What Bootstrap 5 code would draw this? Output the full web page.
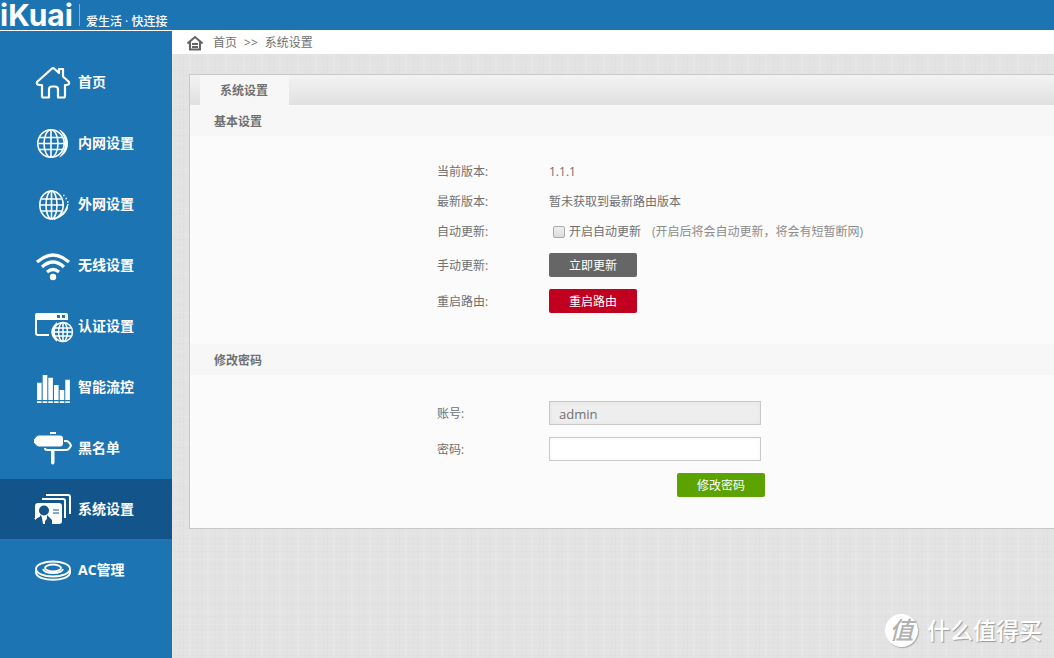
<!DOCTYPE html>
<html lang="zh-CN">
<head>
<meta charset="utf-8">
<meta name="viewport" content="width=device-width, initial-scale=1">
<title>iKuai 系统设置</title>
<link href="https://cdn.jsdelivr.net/npm/bootstrap@5.3.0/dist/css/bootstrap.min.css" rel="stylesheet">
<style>
  body {
    font: 12px/18px "Open Sans", "Noto Sans CJK SC", sans-serif;
    color: #707070;
    background-color: #e3e3e3;
    background-image:
      repeating-linear-gradient(90deg, #0000 0 3px, #00000003 3px 4px, #0000 4px 9px, #ffffff18 9px 11px, #0000 11px 17px, #00000003 17px 18px),
      repeating-linear-gradient(0deg, #0000 0 2px, #00000003 2px 3px, #0000 3px 7px, #ffffff18 7px 8px, #0000 8px 13px);
  }
  .topbar { height: 30px; background: #1d74b3; color: #fff; }
  .brand-name { font: 700 30px/30px Inter, sans-serif; width: 79px; color: #fff; }
  .brand-rule { width: 1px; height: 22px; background: #7fb0d6; }
  .slogan { font-size: 12px; line-height: 16px; font-weight: 500; padding: 14px 0 0 6px; }
  .sidebar { width: 172px; background: #1d74b3; border-top: 1px solid #fff; padding-top: 21px; gap: 1px; }
  .side-link { height: 60px; padding-left: 32px; gap: 4px; color: #fff; font-size: 14px; font-weight: 700; text-decoration: none; }
  .side-link:hover, .side-link.active { background: #13558a; color: #fff; }
  .side-link svg { width: 42px; height: 40px; flex: none; }
  .crumbs { height: 24px; background: #fff; padding: 2px 0 0 15px; gap: 7px; }
  .crumbs a { color: #707070; text-decoration: none; }
  .crumbs svg { width: 16px; height: 16px; margin-right: 3px; }
  .panel { margin: 20px 0 0 17px; background: #fbfbfb; border: 1px solid #c8c8c8; border-right: 0; }
  .tabstrip { height: 30px; padding-left: 10px; background: linear-gradient(#f3f3f3, #e0e0e0); }
  .tab-btn { border: 0; background: #f7f7f7; color: #707070; font-weight: 700; padding: 2px 21px 0 20px; }
  .section-title { margin: 0; font-size: 12px; line-height: 29px; font-weight: 700; background: #f7f7f7; padding: 2px 0 0 24px; }
  .section-body { padding: 20px 0 25px calc(25% + 31px); }
  .version-body { padding-top: 21px; }
  .line { min-height: 30px; }
  .line-tall { min-height: 36px; }
  .line-label { width: 112px; flex: none; }
  .line-tall .line-label { padding-top: 2px; }
  .act { width: 88px; height: 24px; border: 0; border-radius: 2px; color: #fff; font-size: 12px; line-height: 22px; padding: 2px 0 0; }
  .act-gray { background: #666; }
  .act-red { background: #c1001f; }
  .act-green { background: #5ca300; }
  .field { width: 212px; height: 24px; border: 1px solid #c8c8c8; color: #707070; background: #fff; font-size: 13px; padding: 2px 9px 0; box-shadow: inset 0 0 4px #0000000c; }
  .field:disabled { background: #eee; }
  .submit-row { width: 328px; }
  .tick { appearance: none; width: 12px; height: 12px; margin: 0 4px; border: 1px solid #aaa; border-radius: 2px; background: linear-gradient(#eee, #ddd); }
  .tick:checked { background: #666; }
  .hint { color: #8c8c8c; margin-left: 11px; }
  .watermark { right: 12px; bottom: 11px; gap: 9px; color: #fff; font-size: 23px; font-weight: 500; line-height: 34px; text-shadow: 1px 1px 1px #999; }
  .watermark-dot { width: 33px; height: 33px; background: #fff; color: #b0b0b0; font-size: 24px; line-height: 31px; text-shadow: none; box-shadow: 1px 1px 1px #aaa; font-style: italic; }
</style>
</head>
<body class="d-flex flex-column min-vh-100 position-relative">
<header class="topbar d-flex align-items-center">
  <div class="brand-name">iKuai</div>
  <div class="brand-rule"></div>
  <div class="slogan">爱生活 · 快连接</div>
</header>
<div class="d-flex flex-grow-1">
  <nav class="sidebar d-flex flex-column flex-shrink-0" aria-label="主菜单">
    <a class="side-link d-flex align-items-center" href="#"><svg viewBox="0 0 42 40" fill="none" stroke="#fff" stroke-width="2.2" stroke-linejoin="round"><path d="M5 20 20 6.500q1-.8 2 0l5 4.500V7h4v7.500l6 5.500q1 3-3 3h-1v11q0 1.500-1.500 1.500H26v-8q0-3-3-3h-3q-3 0-3 3v8h-5.500Q10 35.500 10 34V23H8q-4 0-3-3z"/></svg>首页</a>
    <a class="side-link d-flex align-items-center" href="#"><svg viewBox="0 0 42 40" fill="none" stroke="#fff" stroke-width="1.600"><ellipse cx="19" cy="20.500" rx="13.200" ry="13.800"/><ellipse cx="19" cy="20.500" rx="7" ry="13.800"/><path d="M19 7v27M6 20.500h26M8 14.500h22M8 26.500h22"/><path d="M27 6.500c12 5 12 23 0 28q12-14 0-28z" fill="#fff" stroke="none"/></svg>内网设置</a>
    <a class="side-link d-flex align-items-center" href="#"><svg viewBox="0 0 42 40" fill="none" stroke="#fff" stroke-width="1.600"><ellipse cx="19.500" cy="21" rx="11.700" ry="14"/><ellipse cx="19.500" cy="21" rx="5.500" ry="14"/><path d="M19.500 7v28M8 21h23M9.500 15h20M9.500 27h20"/><path d="M36 20q0 11-14 15.500 8-5 11-9z" fill="#fff" stroke-width="1"/><path d="M31 11.500h1.500M33.500 14.500H35M35 18h1.500"/></svg>外网设置</a>
    <a class="side-link d-flex align-items-center" href="#"><svg viewBox="0 0 42 40" fill="none" stroke="#fff" stroke-width="3.200"><path d="M5 17q16-14 32 0M10 22q11-10 22 0M15 27q6-5 12 0"/><circle cx="21" cy="32" r="3.200" fill="#fff" stroke="none"/></svg>无线设置</a>
    <a class="side-link d-flex align-items-center" href="#"><svg viewBox="0 0 42 40" fill="none" stroke="#fff" stroke-width="1.500"><path d="M3 13V9q0-2 2-2h29q2 0 2 2v5H3zM25 9v3h3V9zm5 0v3h3V9z" fill="#fff" fill-rule="evenodd" stroke="none"/><path d="M4 10v17q0 2 2 2h11" stroke-width="2"/><circle cx="31" cy="26" r="9.500"/><ellipse cx="31" cy="26" rx="4.500" ry="9.500"/><path d="M31 16.500v19M21.500 26h19M23 22h16M23 30h16"/><path d="M25 17q-6 9 0 18-10-9 0-18z" fill="#fff"/></svg>认证设置</a>
    <a class="side-link d-flex align-items-center" href="#"><svg viewBox="0 0 42 40" fill="#fff"><path d="M5 15.700h4.600V33H5zM10.700 8h4.600v25h-4.600zm5.600 2.700h4.600V33h-4.600zM22 18h4.600v15H22zm5.700 5h4.600v10h-4.600zm5.600-10.300h4.600V33h-4.600zM5 34.300h4.600V36H5zm5.700 0h4.600V36h-4.600zm5.600 0h4.600V36h-4.600zm5.700 0h4.600V36H22zm5.700 0h4.600V36h-4.600zm5.600 0h4.600V36h-4.600z"/></svg>智能流控</a>
    <a class="side-link d-flex align-items-center" href="#"><svg viewBox="0 0 42 40" fill="#fff"><path d="M18 4h6v2h-6zM7 7.500h21q3 0 3 3v5q0 3-3 3H7q-2 0-5-4v-3q3-4 5-4z"/><path d="M32 13h2q3 0 5 4.500-2 4.500-5 4.500H15q-2 0-2-2" fill="none" stroke="#fff" stroke-width="2"/><path d="M19 23h3.500v12q-1.700 3-3.500 0z"/></svg>黑名单</a>
    <a class="side-link active d-flex align-items-center" href="#" aria-current="page"><svg viewBox="0 0 42 40" fill="none" stroke="#fff" stroke-width="2"><path d="M14 6h22q2 0 2 2v17M10 10h21q2 0 2 2v17"/><path d="M6 14h21q3 0 3 3v15q0 3-3 3H17l-1-6-3 3v3H3V17q0-3 3-3z" fill="#fff" stroke="none"/><circle cx="12" cy="21.500" r="5" fill="#13558a" stroke="none"/><path d="m9 26-6 5v4h8l-1-6zM15 26l5 5v4h-6l1-6z" fill="#13558a" stroke="none"/><path d="M3 30q1-2 5-3" stroke-width="1.500"/><path d="M21 21h6M21 24h6" stroke="#13558a" stroke-width="1"/></svg>系统设置</a>
    <a class="side-link d-flex align-items-center" href="#"><svg viewBox="0 0 42 40" fill="none" stroke="#fff" stroke-width="1.900"><ellipse cx="21" cy="19" rx="17" ry="7.500"/><ellipse cx="21" cy="18" rx="8" ry="3.500"/><path d="M4 20v3c2 9 32 9 34 0v-3M11 19q1 4 10 4t10-4"/></svg>AC管理</a>
  </nav>
  <main class="flex-grow-1">
    <nav class="crumbs d-flex align-items-center" aria-label="当前位置">
      <svg viewBox="0 0 16 16" fill="none" stroke="#666" stroke-width="2"><path d="M.5 8.500 8 2l7.500 6.500M3 7v7.500h10V7"/><path d="M5 9h6M5 12h6"/></svg>
      <a href="#">首页</a><span>&gt;&gt;</span><a href="#">系统设置</a>
    </nav>
    <section class="panel">
      <div class="tabstrip d-flex" role="tablist"><button class="tab-btn" type="button" role="tab" aria-selected="true">系统设置</button></div>
      <h2 class="section-title">基本设置</h2>
      <div class="section-body version-body">
        <div class="line d-flex align-items-center"><span class="line-label">当前版本:</span><span>1.1.1</span></div>
        <div class="line d-flex align-items-center"><span class="line-label">最新版本:</span><span>暂未获取到最新路由版本</span></div>
        <div class="line d-flex align-items-center"><span class="line-label">自动更新:</span><input class="tick" type="checkbox" id="auto"><label for="auto">开启自动更新</label><span class="hint">(开启后将会自动更新，将会有短暂断网)</span></div>
        <div class="line line-tall d-flex align-items-center"><span class="line-label">手动更新:</span><button class="act act-gray" type="button">立即更新</button></div>
        <div class="line line-tall d-flex align-items-center"><span class="line-label">重启路由:</span><button class="act act-red" type="button">重启路由</button></div>
      </div>
      <h2 class="section-title">修改密码</h2>
      <form class="section-body">
        <div class="line line-tall d-flex align-items-center"><label class="line-label" for="user">账号:</label><input class="field" id="user" type="text" value="admin" disabled></div>
        <div class="line line-tall d-flex align-items-center"><label class="line-label" for="pass">密码:</label><input class="field" id="pass" type="password"></div>
        <div class="line line-tall submit-row d-flex align-items-center justify-content-end"><button class="act act-green" type="button">修改密码</button></div>
      </form>
    </section>
  </main>
</div>
<div class="watermark position-absolute d-flex align-items-center"><span class="watermark-dot rounded-circle text-center">值</span><span>什么值得买</span></div>
<script src="https://cdn.jsdelivr.net/npm/bootstrap@5.3.0/dist/js/bootstrap.bundle.min.js"></script>
</body>
</html>
